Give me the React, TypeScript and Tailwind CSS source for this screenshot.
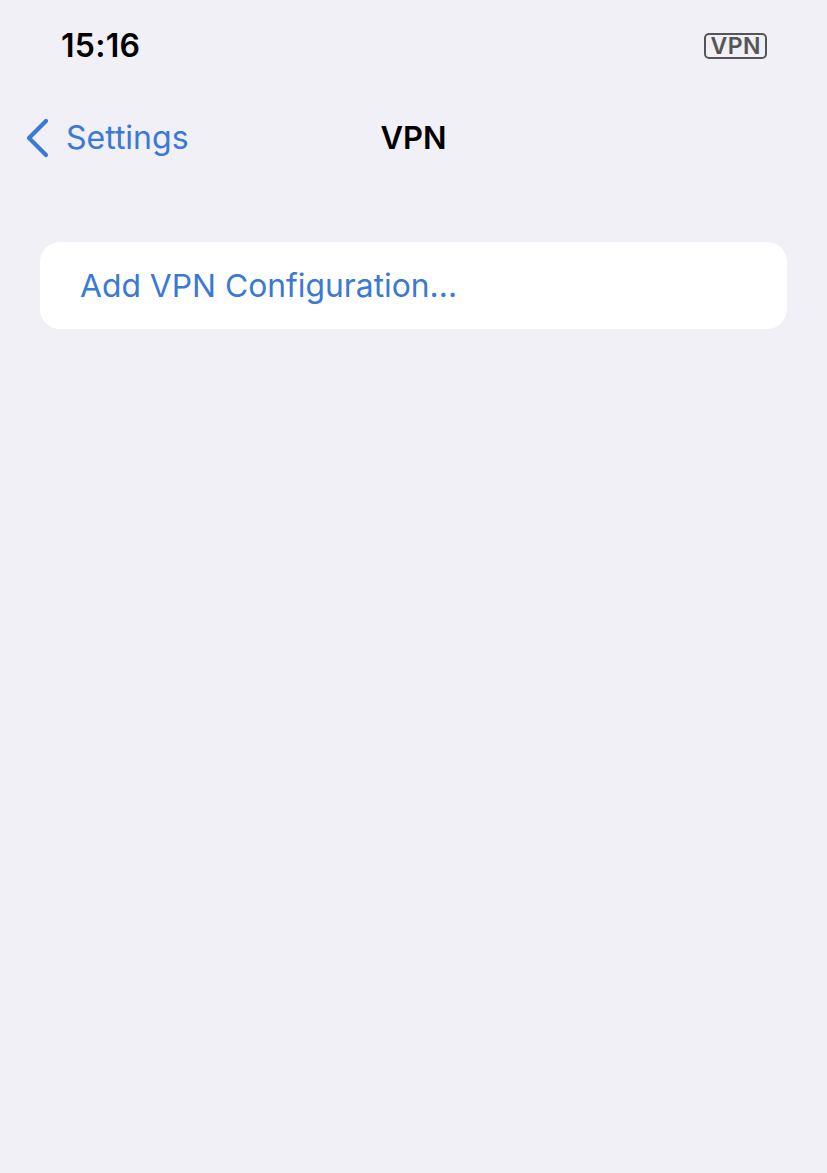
export default function App() {
  return (
    <div
      className="min-h-[1173px] w-full bg-[#f0f0f6] text-black"
      style={{ fontFamily: 'Inter, "Noto Sans", sans-serif' }}
    >
      {/* status bar */}
      <div className="flex h-[92px] items-center justify-between pl-[61px] pr-[60px]">
        <span className="text-[32px] font-semibold tracking-[0.3px]">15:16</span>
        <span className="flex h-[26px] items-center rounded-[5px] border-2 border-[#555] px-[4px] text-[23px] font-semibold leading-none tracking-[0.5px] text-[#555]">
          VPN
        </span>
      </div>

      {/* nav bar */}
      <div className="relative flex h-[92px] items-center">
        <button className="flex items-center pl-[25px] text-[#3a79d5]">
          <svg width="24" height="40" viewBox="0 0 24 40" fill="none">
            <path d="M21 3 L4 20 L21 37" stroke="currentColor" strokeWidth="4.2" strokeLinecap="round" strokeLinejoin="round" />
          </svg>
          <span className="ml-[17px] text-[32px]">Settings</span>
        </button>
        <h1 className="absolute left-1/2 -translate-x-1/2 text-[31px] font-semibold">VPN</h1>
      </div>

      {/* list */}
      <div className="px-[40px] pt-[58px]">
        <div className="flex h-[87px] items-center rounded-[20px] bg-white px-[40px]">
          <span className="text-[31.8px] text-[#3a79d5]">Add VPN Configuration...</span>
        </div>
      </div>
    </div>
  )
}
